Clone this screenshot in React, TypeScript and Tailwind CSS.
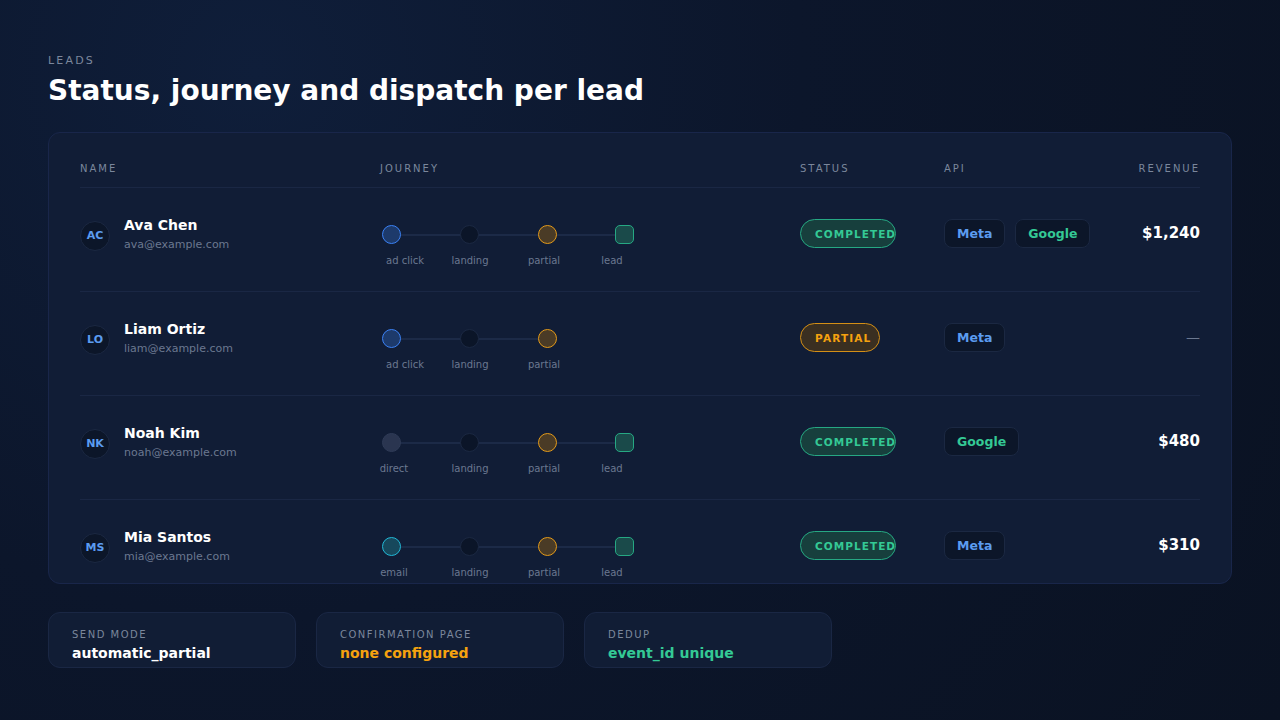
import React from "react";

type Step = { kind: "blue" | "dark" | "amber" | "lead" | "gray" | "cyan"; label: string; x: number };

type Lead = {
  initials: string;
  name: string;
  email: string;
  steps: Step[];
  status: "COMPLETED" | "PARTIAL";
  apis: ("Meta" | "Google")[];
  revenue: string | null;
};

const leads: Lead[] = [
  {
    initials: "AC",
    name: "Ava Chen",
    email: "ava@example.com",
    steps: [
      { kind: "blue", label: "ad click", x: 25 },
      { kind: "dark", label: "landing", x: 90 },
      { kind: "amber", label: "partial", x: 164 },
      { kind: "lead", label: "lead", x: 232 },
    ],
    status: "COMPLETED",
    apis: ["Meta", "Google"],
    revenue: "$1,240",
  },
  {
    initials: "LO",
    name: "Liam Ortiz",
    email: "liam@example.com",
    steps: [
      { kind: "blue", label: "ad click", x: 25 },
      { kind: "dark", label: "landing", x: 90 },
      { kind: "amber", label: "partial", x: 164 },
    ],
    status: "PARTIAL",
    apis: ["Meta"],
    revenue: null,
  },
  {
    initials: "NK",
    name: "Noah Kim",
    email: "noah@example.com",
    steps: [
      { kind: "gray", label: "direct", x: 14 },
      { kind: "dark", label: "landing", x: 90 },
      { kind: "amber", label: "partial", x: 164 },
      { kind: "lead", label: "lead", x: 232 },
    ],
    status: "COMPLETED",
    apis: ["Google"],
    revenue: "$480",
  },
  {
    initials: "MS",
    name: "Mia Santos",
    email: "mia@example.com",
    steps: [
      { kind: "cyan", label: "email", x: 14 },
      { kind: "dark", label: "landing", x: 90 },
      { kind: "amber", label: "partial", x: 164 },
      { kind: "lead", label: "lead", x: 232 },
    ],
    status: "COMPLETED",
    apis: ["Meta"],
    revenue: "$310",
  },
];

const nodeX = [2, 80, 158, 235];

const nodeClass: Record<Step["kind"], string> = {
  blue: "rounded-full bg-[#1d3a6b] border-[1.5px] border-[#3b82f6]",
  dark: "rounded-full bg-[#0b1528] border border-[#1b2842]",
  amber: "rounded-full bg-[#4a3b26] border-[1.5px] border-[#e39a1a]",
  lead: "rounded-[5px] bg-[#1a4a4a] border-[1.5px] border-[#26a883]",
  gray: "rounded-full bg-[#2a3550] border border-[#2f3b57]",
  cyan: "rounded-full bg-[#17485c] border-[1.5px] border-[#22b8d6]",
};

const cols = "grid-cols-[300px_420px_144px_minmax(0,1fr)_120px]";

function Journey({ steps }: { steps: Step[] }) {
  const lastX = nodeX[steps.length - 1];
  return (
    <div className="relative h-[50px] w-[260px]">
      <div
        className="absolute top-[15px] h-[2px] bg-[#1c2a47]"
        style={{ left: nodeX[0] + 9, width: lastX - nodeX[0] }}
      />
      {steps.map((s, i) => (
        <React.Fragment key={i}>
          <div
            className={`absolute top-[6px] h-[19px] w-[19px] ${nodeClass[s.kind]}`}
            style={{ left: nodeX[i] }}
          />
          <span
            className="absolute top-[37px] -translate-x-1/2 whitespace-nowrap text-[10px] leading-none text-[#6b7890]"
            style={{ left: s.x }}
          >
            {s.label}
          </span>
        </React.Fragment>
      ))}
    </div>
  );
}

function StatusPill({ status }: { status: Lead["status"] }) {
  if (status === "PARTIAL") {
    return (
      <span className="inline-flex h-[29px] w-[80px] items-center whitespace-nowrap rounded-full border border-[#d48f16] bg-[#3a2f21] pl-[14px] pt-[2px] text-[10.5px] font-bold tracking-[0.11em] text-[#f5a20f]">
        PARTIAL
      </span>
    );
  }
  return (
    <span className="inline-flex h-[29px] w-[96px] items-center whitespace-nowrap rounded-full border border-[#26a883] bg-[#173f3d] pl-[14px] pt-[2px] text-[10.5px] font-bold tracking-[0.1em] text-[#34c995]">
      COMPLETED
    </span>
  );
}

function ApiBadge({ name }: { name: "Meta" | "Google" }) {
  return (
    <span
      className={`inline-flex h-[29px] items-center rounded-lg border border-[#1b2842] bg-[#0c1629] px-[12px] pt-[2px] text-[12.5px] font-bold ${
        name === "Meta" ? "text-[#5b9cf0]" : "text-[#34c995]"
      }`}
    >
      {name}
    </span>
  );
}

function Row({ lead }: { lead: Lead }) {
  return (
    <div className={`grid h-[104px] shrink-0 ${cols} items-start border-b border-[#1a2744] pt-[31px]`}>
      <div className="flex items-center gap-[14px]">
        <div className="flex h-[30px] w-[30px] items-center justify-center rounded-full border border-[#1b2842] bg-[#0c1629] pt-[1px] text-[11px] font-bold text-[#5b9cf0]">
          {lead.initials}
        </div>
        <div className="-mt-[2px] flex flex-col">
          <span className="text-[14px] font-bold leading-[16px] text-white">{lead.name}</span>
          <span className="mt-[5px] text-[11px] leading-[14px] text-[#6b7890]">{lead.email}</span>
        </div>
      </div>
      <Journey steps={lead.steps} />
      <div>
        <StatusPill status={lead.status} />
      </div>
      <div className="flex gap-[10px]">
        {lead.apis.map((a) => (
          <ApiBadge key={a} name={a} />
        ))}
      </div>
      <div className="flex h-[29px] items-center justify-end">
        {lead.revenue ? (
          <span className="text-[15px] font-bold text-white">{lead.revenue}</span>
        ) : (
          <span className="text-[14px] text-[#6b7890]">—</span>
        )}
      </div>
    </div>
  );
}

function InfoCard({ label, value, tone }: { label: string; value: string; tone: string }) {
  return (
    <div className="flex h-[56px] w-[248px] flex-col rounded-xl border border-[#1a2744] bg-[#111d35] px-[23px] pt-[15px]">
      <span className="text-[10px] leading-[14px] tracking-[0.15em] text-[#7b879c]">{label}</span>
      <span className={`mt-[2px] text-[14px] font-bold leading-[18px] ${tone}`}>{value}</span>
    </div>
  );
}

export default function App() {
  return (
    <div
      className="h-[720px] w-[1280px] overflow-hidden bg-[radial-gradient(circle_at_20%_10%,#0f1e3a_0%,#0c162b_45%,#0a1222_100%)] px-12 pt-[54px] text-white"
      style={{ fontFamily: '"DejaVu Sans", "Liberation Sans", sans-serif' }}
    >
      <div className="text-[11px] leading-[13px] tracking-[0.2em] text-[#7b879c]">LEADS</div>
      <h1 className="mt-[7px] text-[28px] font-bold leading-[34px] text-white">
        Status, journey and dispatch per lead
      </h1>

      <div className="mt-[24px] flex h-[452px] flex-col overflow-hidden rounded-xl border border-[#19264a] bg-[#111d36] px-[31px] pt-[30px]">
        <div className={`grid shrink-0 ${cols} border-b border-[#1a2744] pb-[12px] text-[10px] leading-[12px] tracking-[0.2em] text-[#7b879c]`}>
          <span>NAME</span>
          <span>JOURNEY</span>
          <span>STATUS</span>
          <span>API</span>
          <span className="text-right">REVENUE</span>
        </div>
        {leads.map((l) => (
          <Row key={l.email} lead={l} />
        ))}
      </div>

      <div className="mt-[28px] flex gap-5">
        <InfoCard label="SEND MODE" value="automatic_partial" tone="text-white" />
        <InfoCard label="CONFIRMATION PAGE" value="none configured" tone="text-[#f5a20f]" />
        <InfoCard label="DEDUP" value="event_id unique" tone="text-[#34c995]" />
      </div>
    </div>
  );
}
